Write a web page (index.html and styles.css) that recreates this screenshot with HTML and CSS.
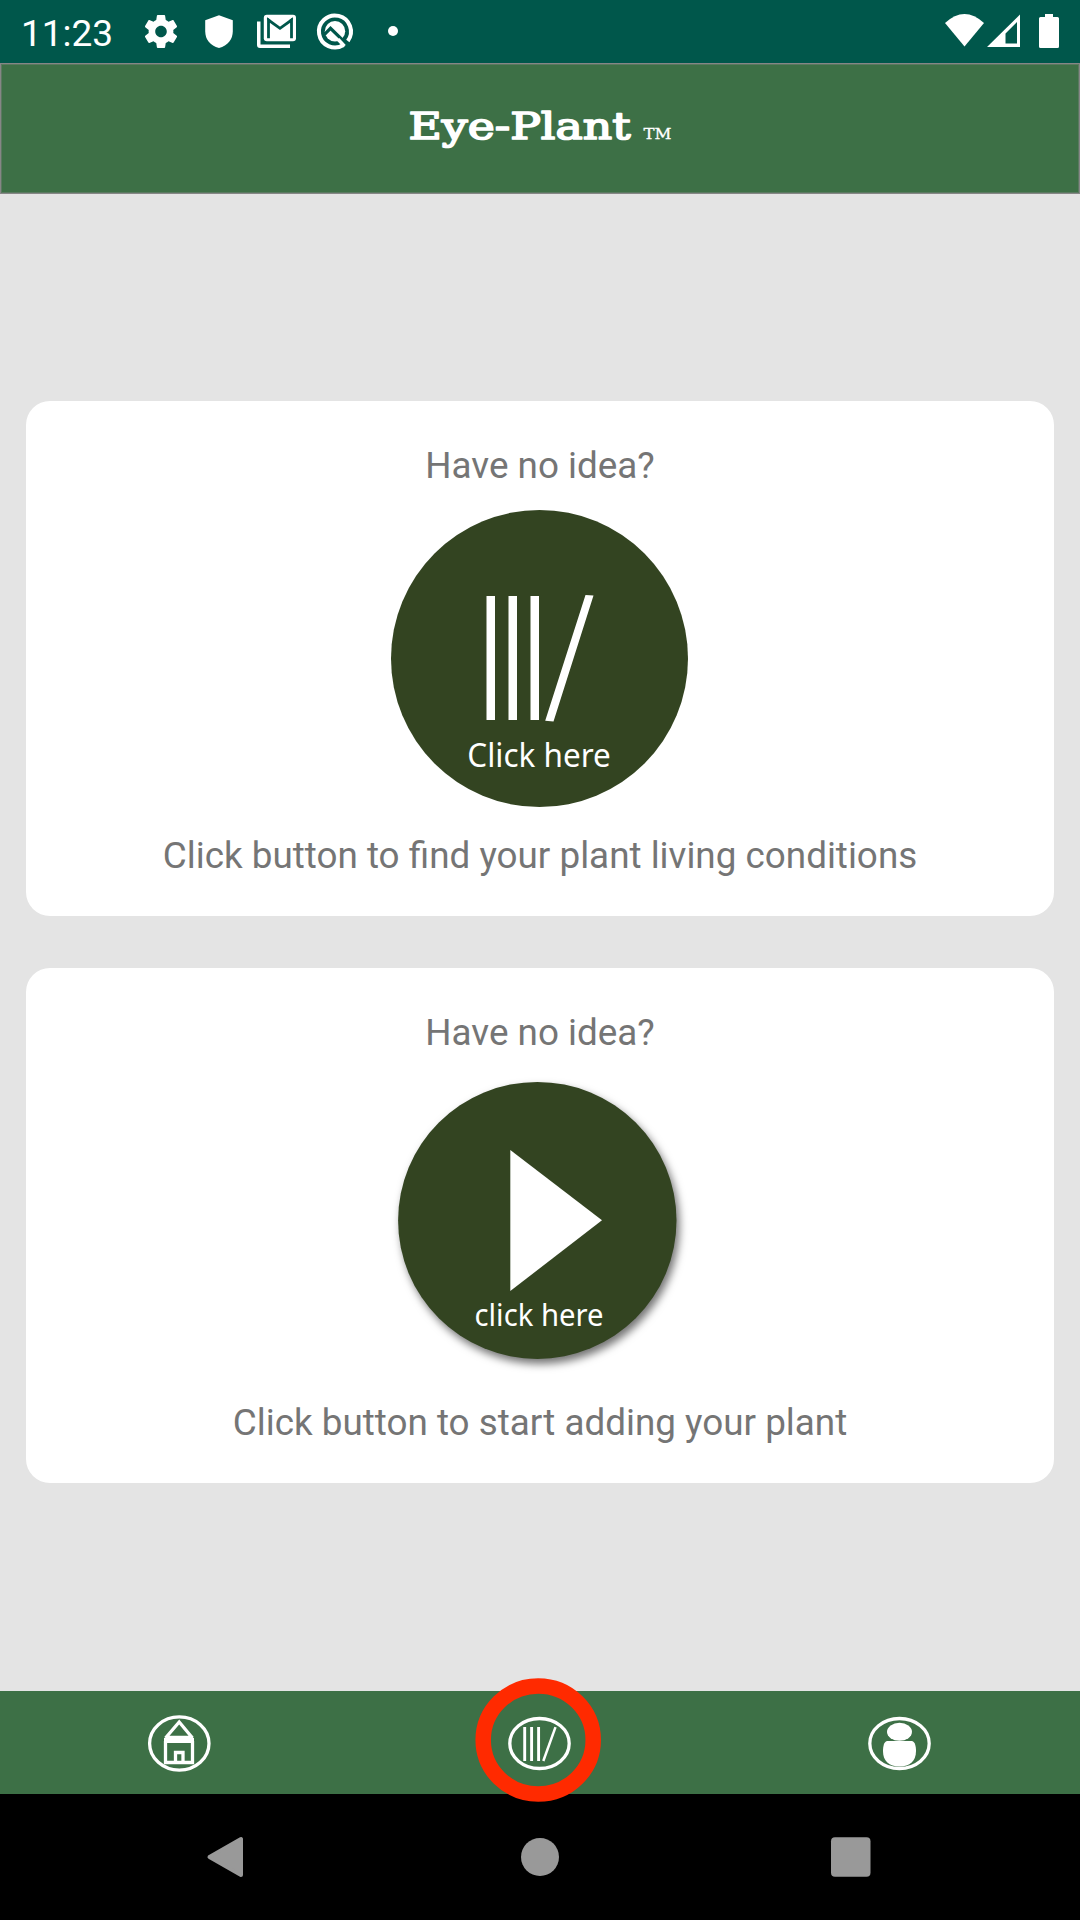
FILE: index.html
```html
<!DOCTYPE html>
<html lang="en">
<head>
<meta charset="utf-8">
<title>Eye-Plant</title>
<link rel="stylesheet" href="styles.css">
</head>
<body>
<div class="status">
  <span class="time">11:23</span>
  <div class="notices">
    <svg viewBox="0 0 58 63"><path transform="translate(9.2 11.7) scale(1.65)" d="M19.43 12.98c.04-.32.07-.64.07-.98s-.03-.66-.07-.98l2.11-1.65c.19-.15.24-.42.12-.64l-2-3.46c-.12-.22-.39-.3-.61-.22l-2.49 1c-.52-.4-1.08-.73-1.69-.98l-.38-2.65C14.46 2.18 14.25 2 14 2h-4c-.25 0-.46.18-.49.42l-.38 2.65c-.61.25-1.17.59-1.69.98l-2.49-1c-.23-.09-.49 0-.61.22l-2 3.46c-.13.22-.07.49.12.64l2.11 1.65c-.04.32-.07.65-.07.98s.03.66.07.98l-2.11 1.65c-.19.15-.24.42-.12.64l2 3.46c.12.22.39.3.61.22l2.49-1c.52.4 1.08.73 1.69.98l.38 2.65c.03.24.24.42.49.42h4c.25 0 .46-.18.49-.42l.38-2.65c.61-.25 1.17-.59 1.69-.98l2.49 1c.23.09.49 0 .61-.22l2-3.46c.12-.22.07-.49-.12-.64l-2.11-1.65zM12 15.5c-1.93 0-3.5-1.57-3.5-3.5s1.57-3.5 3.5-3.5 3.5 1.57 3.5 3.5-1.57 3.5-3.5 3.5z"/></svg>
    <svg viewBox="0 0 58 63"><path d="M29 15.3L42.8 20.3V31c0 8.500-5 14.500-13.800 17C20 45.500 15.200 39.500 15.200 31V20.300z"/></svg>
    <svg viewBox="0 0 58 63"><rect x="15.800" y="14.800" width="32.200" height="26.500" rx="3"/><path class="cut" stroke-width="2.800" d="M20.500 38.300V20L32 28.300L43.500 20V38.300"/><path class="cut" stroke-width="1.500" d="M19.200 18.400L22 20.400M44.800 18.400L42 20.400"/><path d="M9 21.500H12.500V44.500H42V48H12a3 3 0 0 1-3-3z"/></svg>
    <svg viewBox="0 0 58 63"><g transform="translate(29 31.300)"><path class="line" stroke-width="4" d="M8.500 13.700A16 16 0 1 1 12.800 9.700"/><circle r="10.200"/><path class="cut" stroke-width="3.200" d="M-10.500 3L-4.500-3L13.500 14.500"/><path class="line" stroke-width="3.500" d="M3 8L9.500 14.800"/></g></svg>
    <svg viewBox="0 0 58 63"><circle cx="29" cy="31" r="5"/></svg>
  </div>
  <svg class="system" viewBox="0 0 135 63"><path d="M0 23Q19.500 5 39 23L19.500 46.500z"/><path fill-rule="evenodd" d="M75 14.500V47H42zM72 22L60.500 33.500V43.500H72z"/><path d="M100 14H108V17H112.500a1.500 1.500 0 0 1 1.500 1.500V46.500a1.500 1.500 0 0 1-1.500 1.500H95.500a1.500 1.500 0 0 1-1.500-1.500V18.500a1.500 1.500 0 0 1 1.500-1.500H100z"/></svg>
</div>
<header class="appbar">
  <svg viewBox="0 0 320 128"><text class="brand" x="28.500" y="74.500" textLength="222" lengthAdjust="spacingAndGlyphs">Eye-Plant</text><text class="tm" x="263.500" y="74.500" textLength="28" lengthAdjust="spacingAndGlyphs">TM</text></svg>
</header>
<main>
  <section class="card">
    <p>Have no idea?</p>
    <svg viewBox="0 0 1028 347">
      <circle class="disc" cx="513.500" cy="171.500" r="148.500"/>
      <path d="M460.500 109h8.500v124h-8.500zM482.500 109h8.500v124h-8.500zM504.500 109h8.500v124h-8.500zM559.500 108L567.500 108.500L527.500 234.500L519.200 233.800z"/>
      <text class="cta" x="441.300" y="280" textLength="143.500" lengthAdjust="spacingAndGlyphs">Click here</text>
    </svg>
    <p>Click button to find your plant living conditions</p>
  </section>
  <section class="card">
    <p>Have no idea?</p>
    <svg viewBox="0 0 1028 347">
      <ellipse class="disc raised" cx="511.300" cy="166.400" rx="139.200" ry="138.500"/>
      <path d="M484.300 96L576 166.300L484.300 237z"/>
      <text class="cta small" x="448.500" y="272" textLength="129" lengthAdjust="spacingAndGlyphs">click here</text>
    </svg>
    <p>Click button to start adding your plant</p>
  </section>
</main>
<nav class="tabs">
  <svg viewBox="0 0 360 103"><g class="line" stroke-width="3.300"><ellipse cx="179.300" cy="52.500" rx="29.700" ry="26.600"/><path d="M165.500 47L179.200 31L192.500 47M166 46.500H193M165.500 50V71.500H192.500V50M175.500 71V61.500H183V71"/><path d="M164 49.500H194" stroke-width="5"/></g></svg>
  <svg viewBox="0 0 360 103"><g class="line" stroke-width="3.300"><ellipse cx="179.500" cy="52.500" rx="29.700" ry="25"/><path stroke-width="2.900" d="M164.700 36V70M171.600 36V70M178.600 36V70"/><path stroke-width="2.500" d="M195.500 36.200L183.300 70"/></g><ellipse class="ring" cx="178.200" cy="49" rx="55" ry="54"/></svg>
  <svg viewBox="0 0 360 103"><ellipse class="line" stroke-width="3.300" cx="179.500" cy="52.500" rx="29.700" ry="25"/><ellipse cx="179.500" cy="40.800" rx="12.500" ry="9"/><path d="M167 50H192C195 51 196 55 196 60C196 70 190 75.500 179.500 75.500S163 70 163 60C163 55 164 51 167 50z"/></svg>
</nav>
<div class="sysnav">
  <svg viewBox="0 0 311 126"><path class="back" d="M135.500 63L167 45V81z"/></svg>
  <svg viewBox="0 0 311 126"><circle cx="155" cy="63" r="19"/></svg>
  <svg viewBox="0 0 311 126"><rect x="135" y="43.200" width="39.500" height="39.500" rx="4"/></svg>
</div>
</body>
</html>
```
FILE: styles.css
```css
* { box-sizing: border-box; }
body {
  margin: 0;
  height: 1920px;
  display: flex;
  flex-direction: column;
  overflow: hidden;
  background: #e4e4e4;
  font-family: Roboto, sans-serif;
}
svg { display: block; fill: #fff; overflow: visible; }
.line { fill: none; stroke: #fff; }
.status {
  height: 63px;
  flex: none;
  display: flex;
  background: #00574b;
  color: #fff;
}
.time {
  width: 132px;
  padding-left: 21px;
  font-size: 37px;
  line-height: 67px;
}
.notices { display: flex; }
.notices svg { width: 58px; height: 63px; }
.cut { fill: none; stroke: #00574b; }
.system { width: 135px; height: 63px; margin-left: auto; }
.appbar {
  height: 131px;
  flex: none;
  display: flex;
  justify-content: center;
  background: #3d7046;
  border: 1px solid #868686;
  box-shadow: inset 0 0 0 1px rgba(134, 134, 134, .4);
}
.appbar svg { width: 320px; height: 128px; }
.brand {
  font: 37.500px "DejaVu Serif", serif;
  stroke: #fff;
  stroke-width: 1.700px;
  stroke-linejoin: round;
}
.tm { font: 14.500px "DejaVu Serif", serif; stroke: #fff; stroke-width: .3px; }
main {
  flex: 1;
  display: flex;
  flex-direction: column;
  gap: 52px;
  padding: 207px 26px 0;
}
.card {
  height: 515px;
  padding-top: 43px;
  background: #fff;
  border-radius: 24px;
}
.card p {
  margin: 0;
  text-align: center;
  font-size: 36.830px;
  line-height: 44px;
  color: #757575;
}
.card svg { width: 1028px; height: 347px; margin-top: -1px; }
.disc { fill: #334421; }
.raised { filter: drop-shadow(3px 5px 4px rgba(0, 0, 0, .55)); }
.cta { font: 32.500px "Noto Sans", sans-serif; }
.small { font-size: 30px; }
.tabs {
  height: 103px;
  flex: none;
  display: flex;
  position: relative;
  z-index: 1;
  background: #3d7046;
}
.tabs svg { width: 360px; height: 103px; }
.ring { fill: none; stroke: #ff2a00; stroke-width: 15.500px; }
.sysnav {
  height: 126px;
  flex: none;
  display: flex;
  justify-content: center;
  background: #000;
}
.sysnav svg { width: 311px; height: 126px; fill: #999; }
.back { stroke: #999; stroke-width: 4px; stroke-linejoin: round; }
```
